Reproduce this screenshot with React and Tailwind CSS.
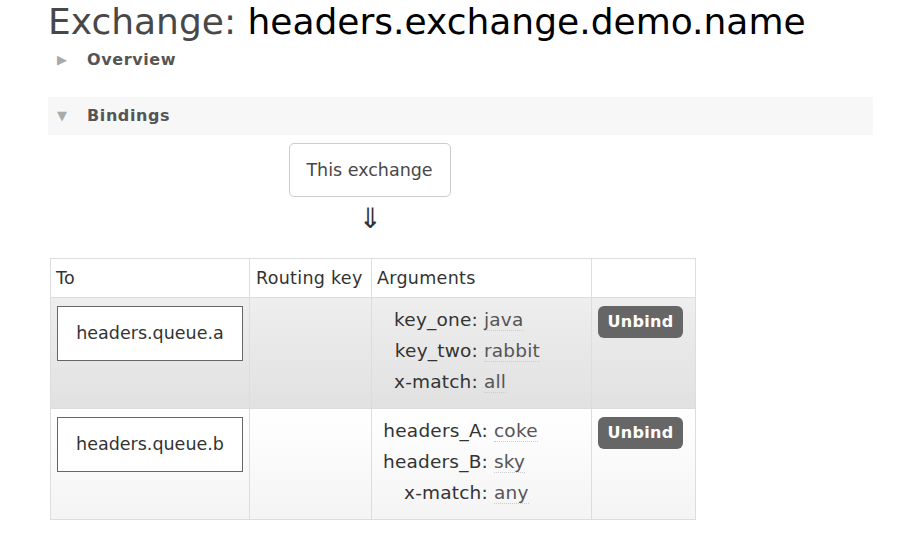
export default function App() {
  const font = { fontFamily: '"DejaVu Sans", Verdana, sans-serif' };
  return (
    <div className="min-h-[539px] w-[910px] bg-white text-[#484848]" style={font}>
      <div className="pl-[48px]">
        <h1 className="text-[36px] leading-[43px] text-[#484848]">
          Exchange: <span className="text-black">headers.exchange.demo.name</span>
        </h1>
        <div className="flex items-center h-[24px] pl-[9px] mt-[5px]">
          <span className="text-[#aaa] text-[13px] w-[30px]">▶</span>
          <span className="text-[16px] tracking-[0.6px] font-bold text-[#555]">Overview</span>
        </div>
        <div className="mt-[25px] mr-[37px] h-[38px] bg-[#f7f7f7] flex items-center pl-[9px]">
          <span className="text-[#aaa] text-[13px] w-[30px]">▼</span>
          <span className="text-[16px] tracking-[0.6px] font-bold text-[#555]">Bindings</span>
        </div>
        <div className="w-[647px] flex flex-col items-center pt-[8px]">
          <div className="ml-[-4px] h-[54px] w-[162px] border border-[#ccc] rounded-[5px] flex items-center justify-center text-[17.5px] text-[#484848]">
            This exchange
          </div>
          <div className="ml-[-2px] h-[43px] leading-[43px] text-[28px] text-[#333]">⇓</div>
        </div>
        <table className="ml-[2px] mt-[18px] border-collapse text-[17.5px] tracking-[0.3px] text-[#333]">
          <thead>
            <tr className="h-[39px] bg-white">
              <th className="w-[199px] border border-[#ddd] px-[5px] text-left font-normal">To</th>
              <th className="w-[122px] border border-[#ddd] px-[6px] text-left font-normal">Routing key</th>
              <th className="w-[220px] border border-[#ddd] px-[5px] text-left font-normal">Arguments</th>
              <th className="w-[104px] border border-[#ddd]"></th>
            </tr>
          </thead>
          <tbody>
            <Row
              bg="bg-gradient-to-b from-[#eeeeee] to-[#e1e1e1]"
              name="headers.queue.a"
              pad="pl-[22px]"
              args={[["key_one", "java"], ["key_two", "rabbit"], ["x-match", "all"]]}
            />
            <Row
              bg="bg-gradient-to-b from-[#ffffff] to-[#f4f4f4]"
              name="headers.queue.b"
              pad="pl-[11px]"
              args={[["headers_A", "coke"], ["headers_B", "sky"], ["x-match", "any"]]}
            />
          </tbody>
        </table>
      </div>
    </div>
  );
}

function Row({ bg, name, args, pad }) {
  return (
    <tr className={`h-[111px] ${bg}`}>
      <td className="border border-[#ddd] align-top px-[6px] pt-[8px]">
        <div className="h-[55px] w-[186px] border border-[#666] bg-white flex items-center justify-center text-[17.5px] tracking-normal text-[#333]">
          {name}
        </div>
      </td>
      <td className="border border-[#ddd]"></td>
      <td className={`border border-[#ddd] align-top pt-[6px] ${pad}`}>
        <table className="border-collapse text-[18.5px] tracking-[0.2px]">
          <tbody>
            {args.map(([k, v]) => (
              <tr key={k} className="h-[31px]">
                <td className="text-right text-[#333] pr-[6px]">{k}:</td>
                <td className="text-[#555]">
                  <span className="border-b border-dotted border-[#ccc]">{v}</span>
                </td>
              </tr>
            ))}
          </tbody>
        </table>
      </td>
      <td className="border border-[#ddd] align-top px-[6px] pt-[8px]">
        <button className="h-[32px] w-[85px] rounded-[6px] bg-[#666] text-white font-bold text-[16px] tracking-[0.3px]">
          Unbind
        </button>
      </td>
    </tr>
  );
}
